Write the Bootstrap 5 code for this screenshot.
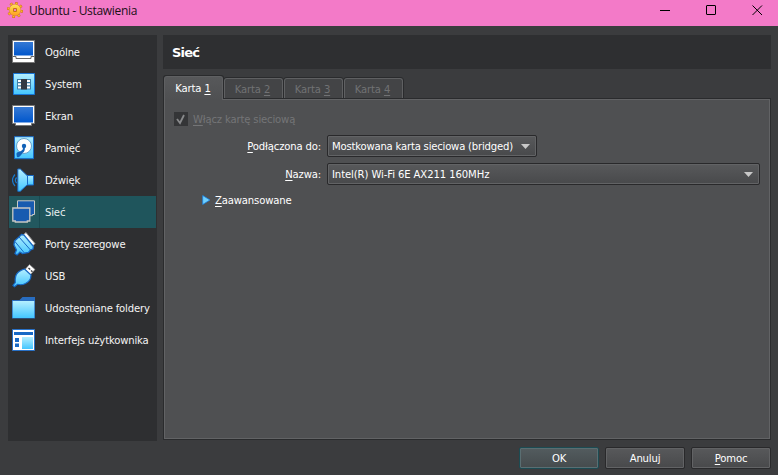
<!DOCTYPE html>
<html lang="pl">
<head>
<meta charset="utf-8">
<title>Ubuntu - Ustawienia</title>
<meta name="viewport" content="width=device-width, initial-scale=1">
<link href="https://cdn.jsdelivr.net/npm/bootstrap@5.3.0/dist/css/bootstrap.min.css" rel="stylesheet">
<style>
body{width:778px;height:475px;overflow:hidden;background:#3b3c3e;color:#fff;font:11.2px/14px "DejaVu Sans Condensed","DejaVu Sans",sans-serif;font-stretch:condensed;letter-spacing:-.16px}
u{text-underline-offset:2px;text-decoration-thickness:1px}
svg{display:block;flex:none}
.titlebar{height:26px;background:#f37ac8;color:#1a1016;font:12px/16px "Open Sans",sans-serif;letter-spacing:-.32px;padding:0 15px 5px 7px}
.titlebar .caption-text{margin-left:6px;padding-top:1px}
.app-gear{margin-top:-2px}
.win-buttons{gap:35px}
.workspace{padding:9px 7px 0 8px;gap:6px;height:414px}
.sidebar{width:149px;height:406px;background:#2e2f31;padding:1px}
.side-item{height:32px;padding-left:3px;color:#f4f4f4}
.side-item:hover{color:#f4f4f4}
.side-item svg{width:24px;height:24px;margin-right:9px}
.side-item span,.form-line span,.advanced-row span,.check-row .check-text{padding-top:2px}
.side-item.active{background:linear-gradient(90deg,#22585f 30px,#184b52 30px,#184b52 31px,#1f555c 31px);color:#e8f0f0}
.heading{height:34px;background:#2e2f31;padding:2px 0 0 9px;font:bold 13px/16px "DejaVu Sans",sans-serif;letter-spacing:-.8px}
.tabs{height:22px;margin-top:7px;padding-left:1px;position:relative;z-index:1}
.tab-btn{height:20px;width:59px;margin-right:1px;background:#434446;border:1px solid #5f6062;border-bottom:0;border-radius:3px 3px 0 0;color:#717274;box-shadow:0 0 0 1px #2a2b2d;padding:2px 2px 0 0}
.tab-btn.active{height:24px;background:linear-gradient(#57585a,#4f5052);color:#fff;margin-bottom:-2px;box-shadow:-1px -1px 0 #2a2b2d,1px -1px 0 #2a2b2d;padding:0 1px 0 0}
.panel{background:#4f5052;border:1px solid #2a2b2d;box-shadow:inset 0 0 0 1px #626365;padding:13px 10px 0}
.check-row{color:#747577;height:14px}
.check-box{width:14px;height:14px;background:#343537;margin-right:5px}
.form-line{height:22px}
.mode-line{margin-top:9px}
.name-line{margin-top:6px}
.line-label{width:147px;margin-right:6px}
.combo{height:22px;background:linear-gradient(#58595b,#48494b);border:1px solid #29292b;border-radius:2px;box-shadow:inset 0 0 0 1px #626365;padding:0 6px 0 4px}
.combo-mode{width:210px;letter-spacing:-.2px}
.combo-name{letter-spacing:-.1px}
.advanced-row{padding-left:28px;gap:4px;height:14px}
.footer-row{height:35px;padding:7px 7px 0 0;gap:6px}
.dlg-btn{width:80px;height:22px;padding:1px 0 0;border:1px solid #29292b;border-radius:2px;background:linear-gradient(#58595b,#48494b);box-shadow:inset 0 0 0 1px #626365;color:#fff;letter-spacing:inherit}
.dlg-btn.ok{border-color:#1c4b52;box-shadow:inset 0 0 0 1px #5a6e72;background:linear-gradient(#535c5f,#454b4d)}
</style>
</head>
<body>
<svg width="0" height="0" class="position-absolute"><defs>
<linearGradient id="blue" x2="0" y2="1"><stop stop-color="#3579d4"/><stop offset="1" stop-color="#0056cc"/></linearGradient>
<linearGradient id="cyan" x2="0" y2="1"><stop stop-color="#b5efff"/><stop offset="1" stop-color="#43c6ff"/></linearGradient>
<linearGradient id="gold" x2="0" y2="1"><stop stop-color="#ffe45c"/><stop offset="1" stop-color="#ff9d1c"/></linearGradient>
</defs></svg>
<header class="titlebar d-flex align-items-center">
<svg class="app-gear" width="16" height="16" viewBox="0 0 16 16"><circle cx="8" cy="8" r="6.900" fill="none" stroke="#c06a0c" stroke-width="2.200" stroke-dasharray="2.600 2.819"/><circle cx="8" cy="8" r="6.900" fill="none" stroke="#ffb62c" stroke-width="1.400" stroke-dasharray="2 3.419" stroke-dashoffset="-.3"/><circle cx="8" cy="8" r="5.800" fill="url(#gold)" stroke="#d8851c" stroke-width=".5"/><path d="M6.500 6.500h3v3h-3z" fill="#f37ac8" stroke="#c47a14"/></svg>
<span class="caption-text">Ubuntu - Ustawienia</span>
<div class="win-buttons ms-auto d-flex align-items-center">
<svg width="11" height="11" viewBox="0 0 11 11" shape-rendering="crispEdges"><path d="M0 5.500h10" stroke="#000"/></svg>
<svg width="11" height="11" viewBox="0 0 11 11"><rect x=".5" y=".5" width="9" height="9" rx=".5" fill="none" stroke="#000"/></svg>
<svg width="11" height="11" viewBox="0 0 11 11"><path d="M.5.5l9.500 9.500M10 .5L.5 10" stroke="#000"/></svg>
</div>
</header>
<main class="workspace d-flex align-items-start">
<nav class="sidebar flex-shrink-0">
<a class="side-item d-flex align-items-center text-decoration-none"><svg viewBox="0 0 24 24"><path d="M.5.500h22v22H.500z" fill="#fff" stroke="#777"/><path d="M2 2h19v13.500H2z" fill="url(#blue)"/><path d="M1 16.500h3v2h15v-2h3" fill="none" stroke="#666"/></svg><span>Ogólne</span></a>
<a class="side-item d-flex align-items-center text-decoration-none"><svg viewBox="0 0 24 24"><path d="M1.500 1.500h21v21h-21z" fill="url(#cyan)" stroke="#1976d6"/><path d="M5 7h14v10.500H5z" fill="#3e7fa8"/><path d="M6 8h3v2H6zM6 11.300h3v2H6zM6 14.500h3v2H6zM15 8h3v2h-3zM15 11.300h3v2h-3zM15 14.500h3v2h-3z" fill="#fff"/><path d="M9 7h6v10.500H9z" fill="#343b45"/></svg><span>System</span></a>
<a class="side-item d-flex align-items-center text-decoration-none"><svg viewBox="0 0 24 24"><path d="M.5 1.500h22v18h-3v2h-16v-2h-3z" fill="#fff" stroke="#777"/><path d="M2 3h19v15.500H2z" fill="url(#blue)"/></svg><span>Ekran</span></a>
<a class="side-item d-flex align-items-center text-decoration-none"><svg viewBox="0 0 24 24"><path d="M2.500.700h19v22h-19z" fill="url(#cyan)" stroke="#1769c6"/><circle cx="12" cy="10" r="7.500" fill="#fff" stroke="#68a4cc"/><path d="M4.500 18.500q-.5-2 2-2.500l2.500-1q2.500-1.500 2-3.500l1.700-.5q.8 4-2.200 6-2.500 4-4.500 4.300-1.500 0-1.500-2.800z" fill="#1262b8"/><circle cx="12" cy="10" r="2.200" fill="#1262b8"/></svg><span>Pamięć</span></a>
<a class="side-item d-flex align-items-center text-decoration-none"><svg viewBox="0 0 24 24"><path d="M15 7.500h6.500v9.500H15z" fill="url(#cyan)" stroke="#1769c6"/><path d="M5.800 1h2.500L15.500 8v8.500l-7.200 6.800H5.800z" fill="url(#cyan)" stroke="#1769c6"/><path d="M3 6.500q-5 5.500 0 11.500M4.600 9.500q-2.500 2.700 0 5.500" fill="none" stroke="#1979cc" stroke-width="1.200"/></svg><span>Dźwięk</span></a>
<a class="side-item active d-flex align-items-center text-decoration-none"><svg viewBox="0 0 24 24"><path d="M5.500.8h17v13.700h-2v1.200H5.500z" fill="#185bb0" stroke="#c8c8c4"/><path d="M.8 8h17v13h-2.500v1H3.300v-1H.8z" fill="#185bb0" stroke="#c8c8c4" stroke-width="1.300"/></svg><span>Sieć</span></a>
<a class="side-item d-flex align-items-center text-decoration-none"><svg viewBox="0 0 24 24"><path d="M11 3l3-2.500 9 11-2.500 3z" fill="#fff" stroke="#888"/><path d="M9.500 2.500l2.500.5 9.500 11.500-.5 2.500-2.500 1-2 2.500-6 1-2.500-1.500-3 3-2-1.500 1.500-3.500L2 13l.5-4 4.500-4z" fill="url(#cyan)" stroke="#1769c6" stroke-width="1.300"/><path d="M7 5l11.500 13M2.500 9L12 20.500" fill="none" stroke="#1769c6"/></svg><span>Porty szeregowe</span></a>
<a class="side-item d-flex align-items-center text-decoration-none"><svg viewBox="0 0 24 24"><path d="M13 5.500L17.500.500l5.500 5-4.500 5z" fill="#fff" stroke="#888" stroke-width=".7"/><path d="M16.500 4l1.700 1.500M19 6.500l1.500 1.300" stroke="#444" stroke-width="1.500"/><path d="M12.500 5l6.500 6q0 6-5.500 8.500-4 2-8 .8l-3 2.400-1.500-1.200 2.300-3Q2.500 11 6.500 8 9 6 12.500 5z" fill="url(#cyan)" stroke="#1769c6" stroke-width="1.200"/></svg><span>USB</span></a>
<a class="side-item d-flex align-items-center text-decoration-none"><svg viewBox="0 0 24 24"><path d="M0 4h7.500l3-3H23v21.500H0z" fill="#286dc0"/><path d="M.7 5H22.300v17H.700z" fill="url(#cyan)"/></svg><span>Udostępniane foldery</span></a>
<a class="side-item d-flex align-items-center text-decoration-none"><svg viewBox="0 0 24 24"><path d="M.5 1.500h22v21H.500z" fill="#fff" stroke="#2870c6"/><path d="M2 4h19v3H2zM3 10h4v4H3zM3 15.500h4v3.500H3z" fill="#1769c6"/><path d="M10 9h11v12H10z" fill="url(#cyan)"/></svg><span>Interfejs użytkownika</span></a>
</nav>
<section class="flex-grow-1 align-self-stretch d-flex flex-column">
<h1 class="heading d-flex align-items-center mb-0">Sieć</h1>
<div class="tabs d-flex align-items-end">
<div class="tab-btn active d-flex align-items-center justify-content-center"><span>Karta <u>1</u></span></div>
<div class="tab-btn d-flex align-items-center justify-content-center"><span>Karta <u>2</u></span></div>
<div class="tab-btn d-flex align-items-center justify-content-center"><span>Karta <u>3</u></span></div>
<div class="tab-btn d-flex align-items-center justify-content-center"><span>Karta <u>4</u></span></div>
</div>
<div class="panel flex-grow-1">
<div class="check-row d-flex align-items-center"><span class="check-box"><svg width="14" height="14" viewBox="0 0 14 14"><path d="M3 7l3 4 4-8" fill="none" stroke="#88898b" stroke-width="1.800"/></svg></span><span class="check-text"><u>W</u>łącz kartę sieciową</span></div>
<div class="form-line mode-line d-flex align-items-center"><span class="line-label text-end"><u>P</u>odłączona do:</span><div class="combo combo-mode d-flex align-items-center justify-content-between"><span>Mostkowana karta sieciowa (bridged)</span><svg width="9" height="5"><path d="M0 0h9L4.500 5z" fill="#c8c8c8"/></svg></div></div>
<div class="form-line name-line d-flex align-items-center"><span class="line-label text-end"><u>N</u>azwa:</span><div class="combo combo-name flex-grow-1 d-flex align-items-center justify-content-between"><span>Intel(R) Wi-Fi 6E AX211 160MHz</span><svg width="9" height="5"><path d="M0 0h9L4.500 5z" fill="#c8c8c8"/></svg></div></div>
<div class="advanced-row d-flex align-items-center mt-2"><svg width="9" height="10"><path d="M.7.500L8 5 .7 9.500z" fill="#6fd0ff" stroke="#1b7fe0" stroke-width=".8"/></svg><span><u>Z</u>aawansowane</span></div>
</div>
</section>
</main>
<footer class="footer-row d-flex justify-content-end">
<button class="dlg-btn ok">OK</button><button class="dlg-btn">Anuluj</button><button class="dlg-btn"><u>P</u>omoc</button>
</footer>
<script src="https://cdn.jsdelivr.net/npm/bootstrap@5.3.0/dist/js/bootstrap.bundle.min.js"></script>
</body>
</html>
